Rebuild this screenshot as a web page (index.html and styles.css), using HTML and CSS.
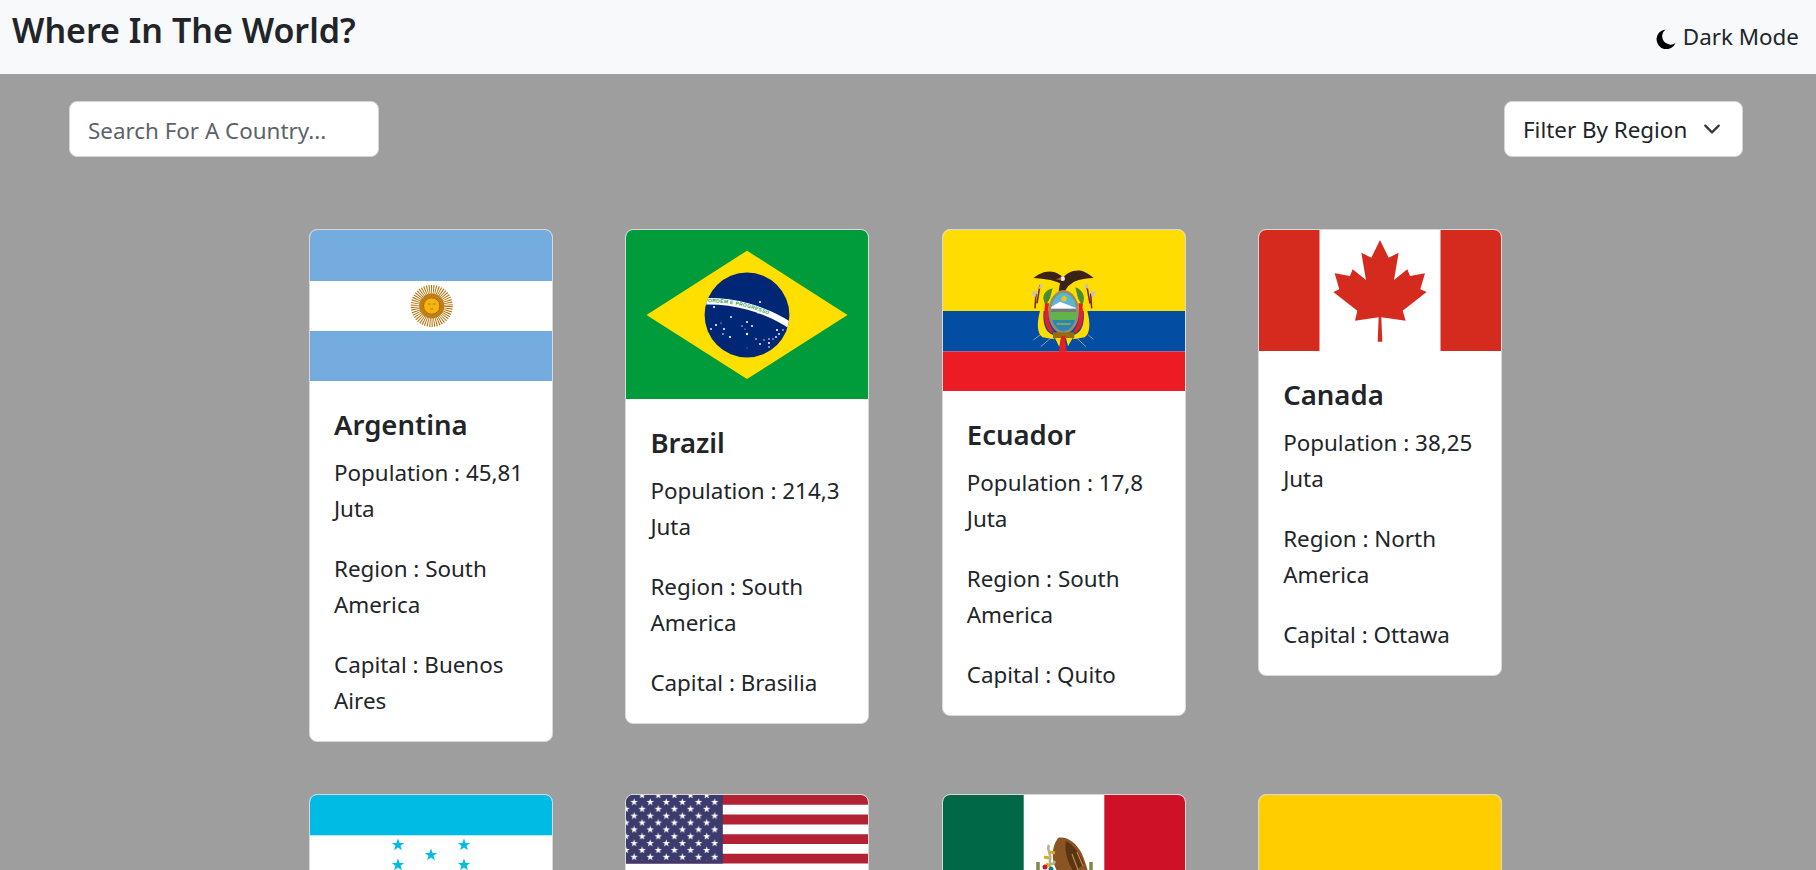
FILE: index.html
```html
<!DOCTYPE html>
<html lang="en">
<head>
<meta charset="utf-8">
<title>Where In The World?</title>
<link rel="stylesheet" href="styles.css">
</head>
<body>
<nav class="navbar">
  <h1 class="brand">Where In The World?</h1>
  <button class="mode">
    <svg class="moon" viewBox="0 0 20 20"><path d="M9.6.4A9.9 9.9 0 1 0 19.6 14 8.3 8.3 0 0 1 9.6.4Z"/></svg>
    <span>Dark Mode</span>
  </button>
</nav>
<main class="page">
  <div class="toolbar">
    <input class="search" type="text" placeholder="Search For A Country...">
    <select class="filter">
      <option>Filter By Region</option>
      <option>Africa</option>
      <option>America</option>
      <option>Asia</option>
      <option>Europe</option>
      <option>Oceania</option>
    </select>
  </div>
  <section class="grid">
    <article class="card">
      <svg class="flag" viewBox="0 0 242 151.25">
        <rect width="242" height="151.25" fill="#74acdf"/>
        <rect y="51" width="242" height="50" fill="#fff"/>
        <circle cx="121.7" cy="76" r="14.5" fill="none" stroke="#b8720c" stroke-width="13" stroke-dasharray=".85 .97"/>
        <circle cx="121.7" cy="76" r="10.5" fill="none" stroke="#c07f14" stroke-width="4"/>
        <circle cx="121.7" cy="76" r="8.2" fill="#f6b40e" stroke="#a8620c" stroke-width="1"/>
        <path d="M118 74h2.5M123 74h2.5M120.5 79h2.5" stroke="#c98a1c" stroke-width="1.4"/>
      </svg>
      <div class="card-body">
        <h2 class="name">Argentina</h2>
        <p>Population : 45,81 Juta</p>
        <p>Region : South America</p>
        <p>Capital : Buenos Aires</p>
      </div>
    </article>
    <article class="card">
      <svg class="flag" viewBox="0 0 242 169.4">
        <rect width="242" height="170" fill="#009c3b"/>
        <polygon points="20.5,85 121,20.7 221.5,85 121,149" fill="#ffdf00"/>
        <clipPath id="globe"><circle cx="121" cy="85" r="42.4"/></clipPath>
        <circle cx="121" cy="85" r="42.4" fill="#002776"/>
        <g clip-path="url(#globe)">
          <path id="band" d="M76 71.5C105 70 140 78 168 98" fill="none" stroke="#fff" stroke-width="6.4"/>
          <text class="motto"><textPath href="#band" startOffset="6">ORDEM E PROGRESSO</textPath></text>
          <g fill="#fff">
            <circle cx="88" cy="77" r="1"/><circle cx="134" cy="72" r="1"/><circle cx="132" cy="83" r=".7"/>
            <circle cx="105" cy="87" r=".9"/><circle cx="90" cy="95" r="1.1"/><circle cx="95" cy="93" r=".6"/>
            <circle cx="85" cy="99" r=".9"/><circle cx="98" cy="99" r="1"/><circle cx="97" cy="104" r=".8"/>
            <circle cx="104" cy="107" r="1.1"/><circle cx="121" cy="92" r="1"/><circle cx="116" cy="96" r=".7"/>
            <circle cx="126" cy="96" r="1"/><circle cx="119" cy="99" r=".5"/><circle cx="121" cy="104" r="1.2"/>
            <circle cx="130" cy="109" r=".8"/><circle cx="134" cy="114" r=".9"/><circle cx="138" cy="110" r=".7"/>
            <circle cx="143" cy="109" r=".8"/><circle cx="143" cy="113" r="1"/><circle cx="143" cy="117" r=".8"/>
            <circle cx="147" cy="109" r=".7"/><circle cx="150" cy="107" r=".9"/><circle cx="153" cy="104" r=".9"/>
            <circle cx="151" cy="100" r="1.1"/><circle cx="157" cy="100" r=".8"/><circle cx="121" cy="118" r=".4"/>
          </g>
        </g>
      </svg>
      <div class="card-body">
        <h2 class="name">Brazil</h2>
        <p>Population : 214,3 Juta</p>
        <p>Region : South America</p>
        <p>Capital : Brasilia</p>
      </div>
    </article>
    <article class="card">
      <svg class="flag" viewBox="0 0 242 161.3">
        <rect width="242" height="81" fill="#ffdd00"/>
        <rect y="81" width="242" height="40.5" fill="#034ea2"/>
        <rect y="121.5" width="242" height="40" fill="#ed1c24"/>
        <g transform="translate(57 20) scale(.3333)">
          <path d="M100 270 120 255M122 290 155 262M258 290 228 262M280 268 265 255" stroke="#9a9c8c" stroke-width="3" fill="none"/>
          <path d="M120 105 111 160M108 130 105 175M260 105 270 160M272 130 275 175" stroke="#7d1e28" stroke-width="4.5" fill="none"/>
          <path d="M94 126 112 122 105 145ZM120 100 130 108 116 118ZM288 126 270 122 277 145ZM262 100 252 108 266 118Z" fill="#c4c6b8"/>
          <path d="M130 145C130 130 140 120 158 115L150 145 136 170ZM252 145C252 130 242 118 226 112L234 145 248 170Z" fill="#4b8c2e"/>
          <path d="M128 160C110 205 108 250 128 262L163 268 163 255C140 252 122 225 134 160ZM254 160C272 205 274 250 254 262L219 268 219 255C242 252 260 225 248 160Z" fill="#ffdd00"/>
          <path d="M136 160C128 205 134 235 155 250L161 244C146 225 142 200 147 160ZM246 160C254 205 248 235 227 250L221 244C236 225 240 200 235 160Z" fill="#ed1c24"/>
          <path d="M100 84C118 70 140 60 162 66 176 70 184 78 190 82 198 70 220 58 244 62 258 66 270 74 281 84 262 84 240 88 222 95L205 108 192 127 176 122 180 100C158 88 125 86 100 84Z" fill="#3a2216"/>
          <circle cx="188" cy="86" r="7" fill="#efefef"/><path d="M167 88l17-5v7Z" fill="#d2693c"/>
          <ellipse cx="191" cy="186" rx="46" ry="66" fill="#a08c52"/>
          <ellipse cx="191" cy="186" rx="42" ry="61" fill="#8a8f80"/>
          <clipPath id="shield"><ellipse cx="191" cy="186" rx="38" ry="57"/></clipPath>
          <g clip-path="url(#shield)">
            <rect x="150" y="125" width="84" height="122" fill="#5bb6d6"/>
            <circle cx="192" cy="146" r="8" fill="#f4c20d"/>
            <path d="M152 172 180 155 230 175V182H152Z" fill="#fff"/>
            <rect x="150" y="176" width="84" height="10" fill="#777"/>
            <rect x="150" y="186" width="84" height="26" fill="#62b34a"/>
            <rect x="150" y="210" width="84" height="36" fill="#2b87b0"/>
            <path d="M170 222h42" stroke="#e8b90a" stroke-width="3"/>
          </g>
          <rect x="159" y="247" width="64" height="18" fill="#9a6a12"/>
          <path d="M165 264 178 291 183 264ZM218 264 204 289 198 264Z" fill="#ffdd00"/>
          <path d="M184 258 177 305H200L194 258Z" fill="#ed1c24"/>
        </g>
      </svg>
      <div class="card-body">
        <h2 class="name">Ecuador</h2>
        <p>Population : 17,8 Juta</p>
        <p>Region : South America</p>
        <p>Capital : Quito</p>
      </div>
    </article>
    <article class="card">
      <svg class="flag" viewBox="0 0 242 121">
        <rect width="242" height="121" fill="#fff"/>
        <rect width="60.5" height="121" fill="#d52b1e"/>
        <rect x="181.5" width="60.5" height="121" fill="#d52b1e"/>
        <g transform="translate(-19 -10) scale(.3333)">
          <polygon fill="#d52b1e" points="420,60 446,113 476,98 462,180 502,148 510,168 555,160 541,208 560,216 488,272 497,302 424,292 427,365 413,365 416,292 345,302 352,272 280,216 298,208 284,160 330,168 338,148 378,180 364,98 394,113"/>
        </g>
      </svg>
      <div class="card-body">
        <h2 class="name">Canada</h2>
        <p>Population : 38,25 Juta</p>
        <p>Region : North America</p>
        <p>Capital : Ottawa</p>
      </div>
    </article>
    <article class="card">
      <svg class="flag" viewBox="0 0 242 121">
        <defs><polygon id="hstar" points="0,-6.5 1.6,-2 6.2,-2 2.5,.8 3.9,5.3 0,2.6 -3.9,5.3 -2.5,.8 -6.2,-2 -1.6,-2"/></defs>
        <rect width="242" height="121" fill="#fff"/>
        <rect width="242" height="40.3" fill="#00bce4"/>
        <rect y="80.7" width="242" height="40.3" fill="#00bce4"/>
        <g fill="#00bce4">
          <use href="#hstar" x="88" y="50"/><use href="#hstar" x="154" y="50"/>
          <use href="#hstar" x="121" y="60"/>
          <use href="#hstar" x="88" y="70"/><use href="#hstar" x="154" y="70"/>
        </g>
      </svg>
    </article>
    <article class="card">
      <svg class="flag" viewBox="0 0 242 127.4">
        <defs>
          <pattern id="stars" width="16.13" height="13.72" patternUnits="userSpaceOnUse" x="4" y="3">
            <polygon fill="#fff" points="8.07,2.2 8.95,4.9 11.8,4.9 9.5,6.6 10.4,9.3 8.07,7.6 5.75,9.3 6.65,6.6 4.35,4.9 7.2,4.9" transform="translate(-4 -1.9)"/>
            <polygon fill="#fff" points="8.07,2.2 8.95,4.9 11.8,4.9 9.5,6.6 10.4,9.3 8.07,7.6 5.75,9.3 6.65,6.6 4.35,4.9 7.2,4.9" transform="translate(4.06 5)"/>
          </pattern>
        </defs>
        <rect width="242" height="127.4" fill="#fff"/>
        <path d="M0 4.9H242M0 24.5H242M0 44.1H242M0 63.7H242M0 83.3H242M0 102.9H242M0 122.5H242" stroke="#b22234" stroke-width="9.8"/>
        <rect width="96.8" height="68.6" fill="#3c3b6e"/>
        <rect width="92.8" height="65.6" fill="url(#stars)"/>
      </svg>
    </article>
    <article class="card">
      <svg class="flag" viewBox="0 0 242 138.3">
        <rect width="242" height="139" fill="#fff"/>
        <rect width="80.7" height="139" fill="#006847"/>
        <rect x="161.3" width="80.7" height="139" fill="#ce1126"/>
        <g transform="translate(121 69)">
          <path d="M-6-26C2-28 12-22 18-10 22 0 24 6 25 14L12 22C2 20-6 12-10 0-12-8-12-18-6-26Z" fill="#8a5425"/>
          <path d="M2-23C10-19 16-10 20 0L10 8C3-2 0-14 2-23Z" fill="#5b3413"/>
          <path d="M8-10 14 6M13-12 19 2" stroke="#b98a4c" stroke-width="1.2"/>
          <path d="M-15-19C-18-14-12-10-14-4-15 0-11 2-9-3" fill="none" stroke="#b4b08a" stroke-width="2.5"/>
          <path d="M-20-7-15-6M-18 0-13 2M-14-12-9-11" stroke="#d8ac1c" stroke-width="3"/>
          <path d="M-26 -2V8M27 -2V8" stroke="#7d8a4b" stroke-width="3.5"/>
          <circle cx="-19" cy="3" r="2.5" fill="#ce1126"/><circle cx="-13" cy="5" r="2.5" fill="#00838f"/>
        </g>
      </svg>
    </article>
    <article class="card">
      <svg class="flag" viewBox="0 0 242 161.3">
        <rect width="242" height="80.7" fill="#ffcd00"/>
        <rect y="80.7" width="242" height="40.3" fill="#003893"/>
        <rect y="121" width="242" height="40.3" fill="#c8102e"/>
      </svg>
    </article>
  </section>
</main>
</body>
</html>
```
FILE: styles.css
```css
* { box-sizing: border-box; }
html, body { height: 100%; }
body {
  margin: 0;
  overflow: hidden;
  background: #9e9e9e;
  color: #212529;
  font-family: "Noto Sans", "Open Sans", sans-serif;
  font-size: 22.4px;
  line-height: 36px;
}
.navbar {
  display: flex;
  justify-content: space-between;
  align-items: flex-start;
  height: 74px;
  padding: 0 17px 0 12px;
  background: #f8f9fa;
}
.brand {
  margin: 9px 0 0;
  font-size: 34px;
  font-weight: 600;
  line-height: 42px;
  white-space: nowrap;
}
.mode {
  display: flex;
  align-items: center;
  gap: 7px;
  margin-top: 19px;
  padding: 0;
  border: 0;
  background: none;
  color: inherit;
  font: inherit;
}
.moon { width: 20px; height: 20px; margin-top: 3px; fill: #000; }
.toolbar {
  display: flex;
  justify-content: space-between;
  padding: 27px 73px 0 69px;
}
.search, .filter {
  height: 56px;
  border: 1px solid #d3d6d9;
  border-radius: 8px;
  background-color: #fff;
  color: #212529;
  font: inherit;
  padding: 2px 18px 0;
}
.search { width: 310px; outline: 0; }
.search::placeholder { color: #5c636a; opacity: 1; }
.filter {
  width: 239px;
  appearance: none;
  background-image: url("data:image/svg+xml,%3csvg xmlns='http://www.w3.org/2000/svg' viewBox='0 0 16 16'%3e%3cpath fill='none' stroke='%23343a40' stroke-linecap='round' stroke-linejoin='round' stroke-width='2' d='m2 5 6 6 6-6'/%3e%3c/svg%3e");
  background-repeat: no-repeat;
  background-position: right 21px center;
  background-size: 18px 18px;
}
.grid {
  display: grid;
  grid-template-columns: repeat(4, 244px);
  column-gap: 72.4px;
  row-gap: 52px;
  align-items: start;
  padding: 72px 0 0 309px;
}
.card {
  overflow: hidden;
  border: 1px solid #d6d8da;
  border-radius: 8px;
  background: #fff;
}
.flag { display: block; width: 100%; height: auto; }
.motto { font-family: "Liberation Sans", sans-serif; font-size: 5px; font-weight: 700; fill: #2f9e5b; dominant-baseline: middle; letter-spacing: .35px; }
.card-body { padding: 26px 24px 22px; }
.name {
  margin: 0 0 12px;
  font-size: 27.5px;
  font-weight: 600;
  line-height: 36px;
}
.card-body p { margin: 0 0 24px; }
.card-body p:last-child { margin-bottom: 0; }
```
